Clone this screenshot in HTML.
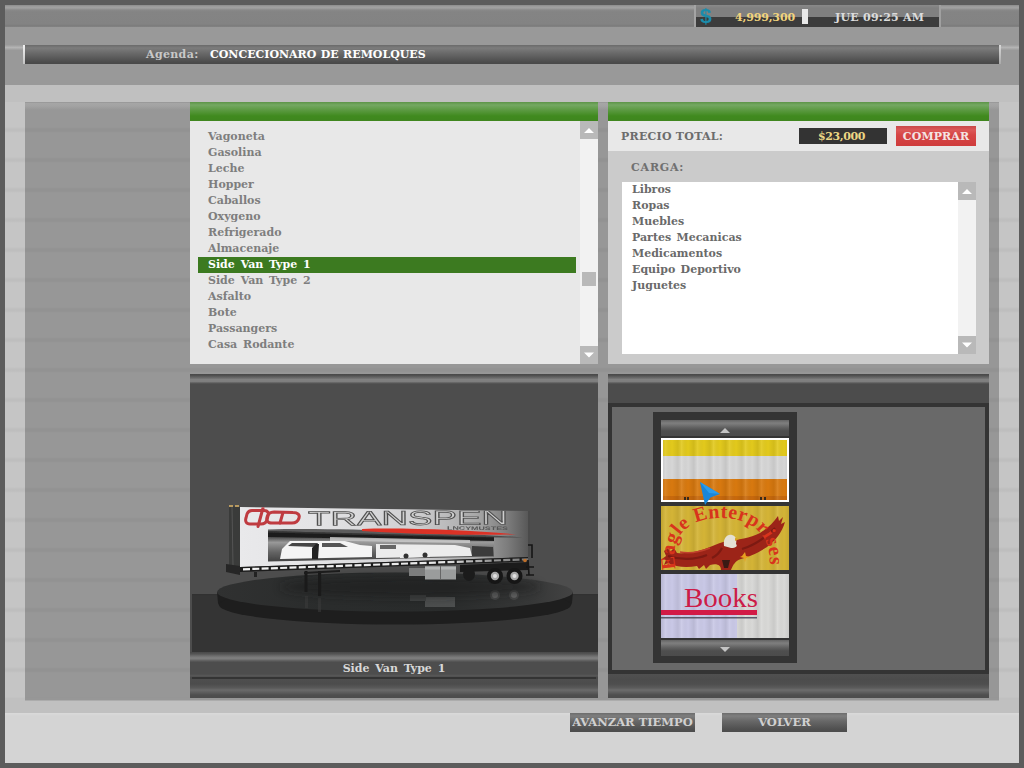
<!DOCTYPE html>
<html lang="es">
<head>
<meta charset="utf-8">
<title>Concecionaro de Remolques</title>
<style>
html,body{margin:0;padding:0}
body{width:1024px;height:768px;overflow:hidden;background:#5c5c5c;position:relative;
 font-family:"DejaVu Serif","Liberation Serif",serif;font-weight:bold;font-size:11px;line-height:16px;color:#777}
.a{position:absolute}
.t{position:absolute;white-space:nowrap;margin-top:1px}
#inner{left:5px;top:5px;width:1014px;height:758px;background:#c5c5c5}
#band3{left:5px;top:85px;width:1014px;height:17px;background:#c0c0c0}
#band1{left:5px;top:5px;width:1014px;height:22px;background:linear-gradient(#8c8c8c 0,#a0a0a0 2px,#a0a0a0 3px,#898989 5px,#848484 7px,#838383 19px,#7d7d7d 20.500px,#828282 22px)}
#band2{left:5px;top:27px;width:1014px;height:58px;background:#999}
#foot1{left:5px;top:698px;width:1014px;height:15px;background:#c0c0c0}
#foot2{left:5px;top:713px;width:1014px;height:50px;background:linear-gradient(#dadada 0,#d4d4d4 3px)}
#stripes{left:5px;top:114px;width:1014px;height:584px;
 background:repeating-linear-gradient(180deg,rgba(0,0,0,0) 0,rgba(0,0,0,0) 13px,rgba(0,0,0,.035) 15px,rgba(0,0,0,.035) 17px,rgba(0,0,0,0) 19px,rgba(0,0,0,0) 30px)}
#main{left:25px;top:102px;width:974px;height:598px;background:linear-gradient(#8e8e8e 0,#a6a6a6 1px,#a3a3a3 4px,#979797 8px,#979797 100%);border-bottom:1px solid #acacac}
/* HUD */
#hud{left:696px;top:5px;width:243px;height:22px;background:linear-gradient(#8a8a8a 0,#808080 3px,#808080 12px,#3c3c3c 12px,#3c3c3c 22px)}
#hudl{left:694px;top:5px;width:2px;height:22px;background:#a4a4a4}
#hudr{left:939px;top:5px;width:2px;height:22px;background:#a0a0a0}
#money{left:735px;top:9px;color:#f2d47c;letter-spacing:-.15px}
#sep{left:802px;top:9px;width:6px;height:15px;background:#e8e8e8}
#clock{left:835px;top:9px;color:#dcdcdc;letter-spacing:.25px}
/* title bar */
#tbar{left:25px;top:45px;width:974px;height:19px;background:linear-gradient(#6a6a6a 0,#7c7c7c 3px,#6a6a6a 8px,#4c4c4c 17px,#484848 19px)}
#tbl{left:23px;top:45px;width:2px;height:19px;background:linear-gradient(#f2f2f2,#c4c4c4)}
#tbr{left:999px;top:45px;width:2px;height:19px;background:linear-gradient(#d8d8d8,#aaa)}
#tbhl{left:5px;top:45px;width:18px;height:5px;background:linear-gradient(#9c9c9c,#b4b4b4 50%,#9c9c9c)}
#tbhr{left:1001px;top:45px;width:18px;height:5px;background:linear-gradient(#9c9c9c,#b4b4b4 50%,#9c9c9c)}
#agenda{left:146px;top:46px;color:#c8c8c8;letter-spacing:.35px}
#title{left:210px;top:46px;color:#fff;word-spacing:.6px}
/* green headers */
.gh{height:19px;top:102px;background:linear-gradient(#5c9447 0,#74a862 3px,#5c9a42 8px,#408a1e 14px,#3f861e 19px)}
/* list panel */
#lp{left:190px;top:121px;width:390px;height:243px;background:#e8e8e8}
.sb{width:18px;background:#f2f2f2}
.sbb{width:18px;height:18px;background:#b9b9b9}
.li{left:208px;word-spacing:2px;color:#7e7e7e}
#sel{left:198px;top:257px;width:378px;height:16px;background:#3c7a20}
/* right panel */
#rp{left:608px;top:121px;width:381px;height:243px;background:#cbcbcb}
#rph{left:608px;top:121px;width:381px;height:30px;background:#e8e8e8}
#price{left:799px;top:128px;width:88px;height:16px;background:#333;color:#ecd684;text-align:center;line-height:17px;letter-spacing:-.4px;padding-right:3px;box-sizing:border-box}
#buy{left:896px;top:126px;width:80px;height:20px;background:linear-gradient(#c84848 0,#dc5858 4px,#d64646 9px,#cf3c3c 20px);color:#f4e4e4;text-align:center;line-height:22px;font-size:11px;letter-spacing:.1px}
#cl{left:622px;top:182px;width:336px;height:172px;background:#fff}
.ci{left:632px;color:#6a6a6a;word-spacing:1.5px}
/* lower panels */
.lph{background:linear-gradient(#5a5a5a 0,#6e6e6e 4px,#747474 6px,#5a5a5a 10px,#4c4c4c 13px,#4c4c4c 100%)}
.btn{height:19px;line-height:18px;text-align:center;color:#d0d0d0;font-size:11.5px;background:linear-gradient(#6c6c6c 0,#7e7e7e 3px,#686868 8px,#505050 16px,#4c4c4c 19px)}
</style>
</head>
<body>
<div class="a" id="inner"></div>
<div class="a" id="band1"></div>
<div class="a" id="band2"></div>
<div class="a" id="band3"></div>
<div class="a" id="foot1"></div>
<div class="a" id="foot2"></div>
<div class="a" id="main"></div>
<div class="a" id="stripes"></div>

<!-- HUD -->
<div class="a" id="hudl"></div><div class="a" id="hud"></div><div class="a" id="hudr"></div>
<div class="t" id="dollar" style="left:700px;top:4px;color:#1b8cab;font-size:20px;line-height:22px;font-family:'Liberation Sans',sans-serif;font-weight:bold;transform:scaleX(1.05);transform-origin:0 0">$</div>
<div class="t" id="money">4,999,300</div>
<div class="a" id="sep"></div>
<div class="t" id="clock">JUE 09:25 AM</div>

<!-- title -->
<div class="a" id="tbhl"></div><div class="a" id="tbhr"></div>
<div class="a" id="tbl"></div><div class="a" id="tbar"></div><div class="a" id="tbr"></div>
<div class="t" id="agenda">Agenda:</div>
<div class="t" id="title">CONCECIONARO DE REMOLQUES</div>

<!-- left list -->
<div class="a gh" style="left:190px;width:408px"></div>
<div class="a" id="lp"></div>
<div class="a sb" style="left:580px;top:121px;height:243px"></div>
<div class="a sbb" style="left:580px;top:121px"></div>
<div class="a sbb" style="left:580px;top:346px"></div>
<div class="a" style="left:582px;top:272px;width:14px;height:14px;background:#b9b9b9"></div>
<div class="a" id="sel"></div>
<div class="t li" style="top:128px">Vagoneta</div>
<div class="t li" style="top:144px">Gasolina</div>
<div class="t li" style="top:160px">Leche</div>
<div class="t li" style="top:176px">Hopper</div>
<div class="t li" style="top:192px">Caballos</div>
<div class="t li" style="top:208px">Oxygeno</div>
<div class="t li" style="top:224px">Refrigerado</div>
<div class="t li" style="top:240px">Almacenaje</div>
<div class="t li" style="top:256px;color:#fff">Side Van Type 1</div>
<div class="t li" style="top:272px">Side Van Type 2</div>
<div class="t li" style="top:288px">Asfalto</div>
<div class="t li" style="top:304px">Bote</div>
<div class="t li" style="top:320px">Passangers</div>
<div class="t li" style="top:336px">Casa Rodante</div>

<!-- right panel -->
<div class="a gh" style="left:608px;width:381px"></div>
<div class="a" id="rp"></div>
<div class="a" id="rph"></div>
<div class="t" style="left:621px;top:128px;color:#6c6c6c;letter-spacing:.25px">PRECIO TOTAL:</div>
<div class="a" id="price">$23,000</div>
<div class="a" id="buy">COMPRAR</div>
<div class="t" style="left:631px;top:159px;color:#707070;letter-spacing:.8px">CARGA:</div>
<div class="a" id="cl"></div>
<div class="a sb" style="left:958px;top:182px;height:172px"></div>
<div class="a sbb" style="left:958px;top:182px"></div>
<div class="a sbb" style="left:958px;top:336px"></div>
<div class="t ci" style="top:181px">Libros</div>
<div class="t ci" style="top:197px">Ropas</div>
<div class="t ci" style="top:213px">Muebles</div>
<div class="t ci" style="top:229px">Partes Mecanicas</div>
<div class="t ci" style="top:245px">Medicamentos</div>
<div class="t ci" style="top:261px">Equipo Deportivo</div>
<div class="t ci" style="top:277px">Juguetes</div>

<svg class="a" style="left:580px;top:121px" width="396" height="243" viewBox="580 121 396 243">
<path d="M584 133 L589 128 L594 133 Z M584 352.500 L594 352.500 L589 357.500 Z M962 194 L967 189 L972 194 Z M962 342.500 L972 342.500 L967 347.500 Z" fill="#fff"/>
</svg>
<!-- lower left: preview -->
<div class="a" id="pv" style="left:190px;top:374px;width:408px;height:324px;background:#4d4d4d"></div>
<div class="a" style="left:192px;top:594px;width:406px;height:58px;background:linear-gradient(#303030 0,#343434 2px,#343434 100%)"></div>
<div class="a" style="left:190px;top:374px;width:408px;height:10px;background:linear-gradient(#484848 0,#505050 1.500px,#6c6c6c 4px,#808080 5.500px,#7e7e7e 7.500px,#5c5c5c 9px,#4d4d4d 10px)"></div>
<!--TRAILER-->
<svg class="a" style="left:190px;top:384px" width="408" height="268" viewBox="190 384 408 268">
<defs>
<linearGradient id="gside" x1="240" x2="528" y1="0" y2="0" gradientUnits="userSpaceOnUse">
<stop offset="0" stop-color="#e9e9eb"/><stop offset=".25" stop-color="#e4e4e6"/><stop offset=".6" stop-color="#d0d0d2"/><stop offset=".82" stop-color="#a8a8a8"/><stop offset=".93" stop-color="#7c7c7c"/><stop offset="1" stop-color="#585858"/>
</linearGradient>
<linearGradient id="gdisc" x1="217" x2="573" y1="0" y2="0" gradientUnits="userSpaceOnUse">
<stop offset="0" stop-color="#303131"/><stop offset=".3" stop-color="#2a2c2c"/><stop offset=".65" stop-color="#292b2b"/><stop offset=".88" stop-color="#363737"/><stop offset="1" stop-color="#434343"/>
</linearGradient>
<linearGradient id="gdash" x1="243" x2="528" y1="0" y2="0" gradientUnits="userSpaceOnUse"><stop offset="0" stop-color="#f4f4f4"/><stop offset=".7" stop-color="#e6e6e6"/><stop offset=".85" stop-color="#a0a0a0"/><stop offset="1" stop-color="#777"/></linearGradient>
<linearGradient id="gphoto" x1="0" x2="0" y1="530" y2="561" gradientUnits="userSpaceOnUse">
<stop offset="0" stop-color="#2a2a2a"/><stop offset=".25" stop-color="#555"/><stop offset=".4" stop-color="#999"/><stop offset=".7" stop-color="#666"/><stop offset="1" stop-color="#444"/>
</linearGradient>
<filter id="blur1" x="-5%" y="-20%" width="110%" height="140%"><feGaussianBlur stdDeviation=".55"/></filter>
<filter id="blur2" x="-20%" y="-50%" width="140%" height="200%"><feGaussianBlur stdDeviation="4"/></filter>
<clipPath id="cside"><path d="M240 507 L528 511 L528 557 L240 567 Z"/></clipPath>
</defs>
<!-- turntable -->
<path d="M217 592 L218 603 A177 19.500 0 0 0 572 603 L573 592 Z" fill="#1e1e1e"/><ellipse cx="395" cy="605" rx="176" ry="19.500" fill="#1e1e1e"/>
<ellipse cx="395" cy="592" rx="178" ry="19.500" fill="url(#gdisc)"/>
<!-- reflections on disc -->
<g opacity=".55">
<rect x="425" y="597" width="30" height="10" fill="#6a6c6c"/>
<rect x="410" y="595" width="16" height="6" fill="#505252"/>
<circle cx="495" cy="595" r="5" fill="#555"/><circle cx="495" cy="595" r="3" fill="#888"/>
<circle cx="514" cy="595" r="5" fill="#555"/><circle cx="514" cy="595" r="3" fill="#888"/>
<rect x="305" y="596" width="3" height="12" fill="#3c3c3c"/><rect x="318" y="598" width="3" height="14" fill="#3c3c3c"/>
</g>
<!-- shadow under trailer -->
<ellipse cx="410" cy="587" rx="130" ry="10" fill="#1c1d1e" opacity=".55" filter="url(#blur2)"/>
<!-- front wall -->
<path d="M229 506 L240 507 L240 568 L229 566 Z" fill="#3a3b3a"/>
<path d="M232 506 L233 566" stroke="#555" stroke-width="1"/>
<path d="M226 564 L240 566 L240 575 L226 572 Z" fill="#262626"/>
<rect x="229" y="505" width="4" height="2" fill="#b89a60"/><rect x="235" y="505" width="4" height="2" fill="#b89a60"/>
<!-- side -->
<path d="M240 507 L528 511 L528 557 L240 567 Z" fill="url(#gside)"/>
<g clip-path="url(#cside)"><g filter="url(#blur1)">
<!-- photo strip -->
<path d="M268 531 L494 537 L494 556.500 L268 561.500 Z" fill="url(#gphoto)"/>
<path d="M268 531 L494 537 L494 541 L268 537 Z" fill="#1e1e1e"/>
<path d="M282 549 L290 541 L345 541 L360 545 L372 546 L372 557 L280 559 Z" fill="#f4f4f4"/>
<path d="M288 546 L292 543 L318 543 L316 547 Z" fill="#444"/>
<path d="M322 543 L340 543 L348 547 L322 547 Z" fill="#555"/>
<path d="M312 548 L316 544 L319 544 L318 559 L312 559 Z" fill="#222"/>
<path d="M376 544 L455 545 L470 548 L472 556 L376 558 Z" fill="#ececec"/>
<path d="M380 545 L396 545 L396 549 L380 549 Z" fill="#666"/>
<path d="M400 552 L418 548 L430 552 L430 557 L400 558 Z" fill="#eee"/>
<circle cx="406" cy="556" r="2.5" fill="#333"/><circle cx="425" cy="555" r="2.5" fill="#333"/>
<path d="M472 546 L493 547 L493 556 L472 556 Z" fill="#3a3a3a"/>
<path d="M330 537 L470 540 L470 543 L330 541 Z" fill="#cfcfcf" opacity=".8"/>
<!-- swooshes -->
<path d="M268 529.500 C330 527.500 450 532 522 537.500 C450 537.500 330 534 268 532.500 Z" fill="#3c3c3c" opacity=".8"/>
<path d="M362 529 C400 527.500 470 530 516 534.500 C480 535.500 420 534.500 362 531 Z" fill="#dc3026"/>
<!-- logo -->
<g fill="none" stroke="#bf3a40" stroke-width="3" stroke-linejoin="round" stroke-linecap="round">
<path d="M252 510.500 L264 510.500 C268 510.500 269 513 268 516 L267 520 C266 523 264 524 261 524 L250 524 C246 524 245 521 246 518 L247 514 C248 511.500 249 510.500 252 510.500 Z"/>
<path d="M274 512 L293 512.500 C298 512.500 300 515 299 518 C298 521.500 296 523 292 523 L272 523 C267 523 266 520 267 517 C268 513.500 270 512 274 512 Z"/>
<path d="M263 508 L258 526.500"/>
<path d="M283 512.500 L280 523"/>
</g>
<!-- name -->
<text x="308" y="525.500" font-family="'Liberation Sans',sans-serif" font-size="20" font-weight="normal" fill="#cfcfcf" stroke="#505050" stroke-width=".75" textLength="200" lengthAdjust="spacingAndGlyphs" transform="rotate(-.3 308 526)">TRANSPEN</text>
<text x="447" y="529.800" font-family="'Liberation Sans',sans-serif" font-size="5" fill="#555" textLength="61" lengthAdjust="spacingAndGlyphs" transform="rotate(.3 447 530)">LNCYMUSTES</text>
</g></g>
<!-- rear edge -->
<path d="M528 511 L530 511 L530 557 L528 557 Z" fill="#4a4a4a"/>
<!-- lower rail -->
<path d="M240 567 L528 557 L528 561.500 L240 572 Z" fill="#1c1c1c"/>
<path d="M243 569.300 L528 559.300" stroke="url(#gdash)" stroke-width="2.200" stroke-dasharray="7 2.300" fill="none"/>
<!-- landing gear -->
<rect x="304.500" y="571" width="3" height="21" fill="#1a1a1a"/><rect x="318" y="571" width="3.200" height="25" fill="#1a1a1a"/>
<path d="M304 572 L340 570 L340 572 L304 574 Z" fill="#1c1c1c"/>
<rect x="254" y="572" width="3" height="5" fill="#222"/>
<!-- tool boxes / tanks -->
<rect x="409" y="568" width="16" height="8" fill="#7c7d7d"/>
<rect x="425" y="566.500" width="31" height="13" fill="#9a9c9c"/>
<rect x="425" y="566.500" width="31" height="3" fill="#b4b6b6"/>
<rect x="440" y="566" width="1" height="13" fill="#666"/>
<!-- suspension & wheels -->
<path d="M460 565 L528 562 L528 570 L460 572 Z" fill="#1b1b1b"/>
<ellipse cx="469" cy="574" rx="6" ry="7" fill="#1b1b1b"/>
<circle cx="495" cy="576" r="8" fill="#161616"/><circle cx="514.500" cy="576" r="8" fill="#161616"/>
<circle cx="495" cy="576" r="4.200" fill="#a8a8a8"/><circle cx="514.500" cy="576" r="4.200" fill="#a8a8a8"/>
<circle cx="495" cy="576" r="2" fill="#e0e0e0"/><circle cx="514.500" cy="576" r="2" fill="#e0e0e0"/>
<!-- rear bumper / ladder -->
<path d="M528 545 L532 545 L532 558 M528 560 L529 575 M526 567 L534 567 M526 575 L534 575" stroke="#161616" stroke-width="1.600" fill="none"/>
<circle cx="525" cy="560.500" r="1.800" fill="#c0702a"/>
</svg>
<!--/TRAILER-->
<div class="a" style="left:190px;top:652px;width:408px;height:25px;background:linear-gradient(#484848 0,#555 2px,#6e6e6e 4px,#808080 6px,#7a7a7a 7px,#5a5a5a 9px,#4d4d4d 10.500px,#4d4d4d 22px,#565656 23.500px,#505050 25px)"></div>
<div class="a" style="left:190px;top:677px;width:408px;height:2px;background:#4a4a4a"></div><div class="a" style="left:192px;top:677px;width:404px;height:2px;background:#343434"></div>
<div class="a" style="left:190px;top:679px;width:408px;height:19px;background:linear-gradient(#4e4e4e 0,#4c4c4c 5px,#5a5a5a 9px,#6a6a6a 11px,#5a5a5a 14px,#4e4e4e 16px,#4c4c4c 19px)"></div>
<div class="t" style="left:190px;top:660px;width:408px;text-align:center;color:#d8d8d8;word-spacing:2px">Side Van Type 1</div>

<!-- lower right: skins -->
<div class="a" style="left:608px;top:374px;width:381px;height:324px;background:#4c4c4c"></div>
<div class="a" style="left:608px;top:374px;width:381px;height:10px;background:linear-gradient(#484848 0,#505050 1.500px,#6c6c6c 4px,#808080 5.500px,#7e7e7e 7.500px,#5c5c5c 9px,#4d4d4d 10px)"></div>
<div class="a" style="left:608px;top:403px;width:381px;height:271px;background:#343434"></div>
<div class="a" style="left:612px;top:407px;width:373px;height:263px;background:#696969"></div>
<div class="a" style="left:608px;top:674px;width:381px;height:24px;background:linear-gradient(#505050 0,#4c4c4c 6px,#4e4e4e 10px,#5c5c5c 14px,#6c6c6c 16px,#5a5a5a 19px,#4e4e4e 21px,#4c4c4c 24px)"></div>
<div class="a" style="left:653px;top:412px;width:144px;height:251px;background:#343434"></div>
<div class="a" style="left:661px;top:420px;width:128px;height:16px;background:linear-gradient(#646464 0,#7e7e7e 3px,#7a7a7a 4px,#5e5e5e 8px,#4e4e4e 11px,#4c4c4c 16px)"></div>
<div class="a" style="left:661px;top:640px;width:128px;height:16px;background:linear-gradient(#646464 0,#7e7e7e 3px,#7a7a7a 4px,#5e5e5e 8px,#4e4e4e 11px,#4c4c4c 16px)"></div>
<!--SKINS-->
<svg class="a" style="left:653px;top:412px" width="144" height="251" viewBox="653 412 144 251">
<defs>
<linearGradient id="folds" x1="0" x2="32" y1="0" y2="0" gradientUnits="userSpaceOnUse" spreadMethod="repeat">
<stop offset="0" stop-color="#000" stop-opacity="0"/><stop offset=".18" stop-color="#000" stop-opacity=".07"/><stop offset=".3" stop-color="#fff" stop-opacity=".1"/><stop offset=".5" stop-color="#000" stop-opacity="0"/><stop offset=".68" stop-color="#000" stop-opacity=".08"/><stop offset=".8" stop-color="#fff" stop-opacity=".08"/><stop offset="1" stop-color="#000" stop-opacity="0"/>
</linearGradient>
<clipPath id="c2"><rect x="661" y="506" width="128" height="64"/></clipPath>
<clipPath id="c3"><rect x="661" y="574" width="128" height="64"/></clipPath>
<path id="arc" d="M676 569 C 668 536 689 518 721 518 C 753 518 776 538 768 572"/>
</defs>
<!-- arrows -->
<path d="M720 433 L725 428 L730 433 Z" fill="#c4c4c4"/>
<path d="M720 647 L730 647 L725 652 Z" fill="#c4c4c4"/>
<!-- skin 1 -->
<rect x="661" y="438" width="128" height="64" fill="#fff"/>
<rect x="663" y="440" width="124" height="16" fill="#e2c91c"/>
<rect x="663" y="456" width="124" height="23" fill="#d6d6d6"/>
<rect x="663" y="479" width="124" height="21" fill="#d8790f"/>
<rect x="663" y="496" width="124" height="4" fill="#c8690c"/>
<rect x="663" y="440" width="124" height="60" fill="url(#folds)"/>
<g fill="#3a2a1a"><rect x="684" y="497" width="2" height="3"/><rect x="687" y="497" width="2" height="3"/><rect x="760" y="497" width="2" height="3"/><rect x="764" y="497" width="2" height="3"/></g>
<!-- skin 2 -->
<rect x="661" y="506" width="128" height="64" fill="#d4b436"/>
<g clip-path="url(#c2)">
<rect x="661" y="506" width="128" height="64" fill="url(#folds)"/>
<path d="M664 551 L668 548 L670 552 L674 548 L677 553 C688 554 700 551 710 547 C717 544 722 542 727 541 C738 540 750 538 760 533 C768 528 774 522 778 516 L779 521 L783 517 L781 524 L785 522 C782 532 776 540 767 547 C758 553 748 557 741 559 C735 561 733 565 731 570 L721 570 C721 565 717 563 710 565 L706 569 L704 565 L699 569 L697 566 C686 568 676 567 668 563 L664 565 L666 560 L662 559 L666 556 Z" fill="#9c2418"/>
<path d="M668 556 C680 560 695 560 707 555 M712 558 C716 556 720 552 722 548 M742 549 C752 546 765 538 775 528" stroke="#7c1a12" stroke-width="2.200" fill="none"/>
<path d="M680 552 C690 554 700 552 710 548" stroke="#c0402c" stroke-width="1.500" fill="none"/>
<path d="M724 546 C723 538 727 534 732 535 C736 536 737 540 736 544 C738 546 736 548 731 548 Z" fill="#e4e0d4"/>
<path d="M735 538 L739 539 L735 541 Z" fill="#d8a020"/>
<path d="M722 560 L730 560 L728 568 L724 568 Z" fill="#3a1a14"/>
<path d="M742 556 L745 552 L746 556 L750 557 L746 558 L745 562 L744 558 L740 557 Z" fill="#e8a020"/>
<text font-family="'Liberation Serif',serif" font-weight="bold" font-size="20" fill="#d8341c"><textPath href="#arc" startOffset="0" textLength="158" lengthAdjust="spacing">Eagle Enterprises</textPath></text>
</g>
<!-- skin 3 -->
<rect x="661" y="574" width="128" height="64" fill="#c9c8e6"/>
<rect x="737" y="574" width="52" height="64" fill="#d9d9d7"/>
<g clip-path="url(#c3)">
<rect x="661" y="574" width="128" height="64" fill="url(#folds)"/>
<rect x="661" y="610" width="96" height="5" fill="#d21a46"/>
<rect x="661" y="617" width="96" height="1.500" fill="#5a5a6a"/>
<text x="684" y="607" font-family="'Liberation Serif',serif" font-size="27" font-weight="normal" fill="#cc1c48" textLength="74" lengthAdjust="spacingAndGlyphs">Books</text>
</g>
<!-- cursor -->
<path d="M700 482 L720 494 L710.500 497.500 L705 505 Z" fill="#1a86d8"/>
<path d="M700 482 L720 494 L709 493 Z" fill="#2a9cec"/>
</svg>
<!--/SKINS-->

<!-- bottom buttons -->
<div class="a btn" style="left:570px;top:713px;width:125px">AVANZAR TIEMPO</div>
<div class="a btn" style="left:722px;top:713px;width:125px">VOLVER</div>

</body>
</html>
